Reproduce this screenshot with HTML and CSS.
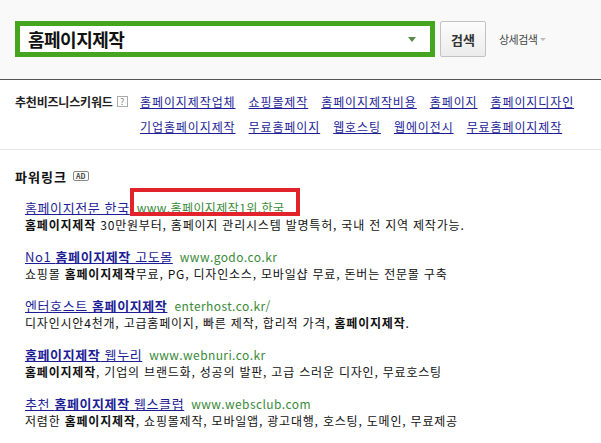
FILE: index.html
```html
<!DOCTYPE html>
<html lang="ko">
<head>
  <meta charset="UTF-8">
  <title>홈페이지제작 : 검색</title>
  <link rel="stylesheet" href="styles.css">
</head>
<body>
  <div class="search-header">
    <div class="search-box">
      <span class="query">홈페이지제작</span>
      <span class="dropdown-arrow"></span>
    </div>
    <button class="search-btn">검색</button>
    <span class="detail-search">상세검색 <span class="small-arrow"></span></span>
  </div>

  <div class="keywords">
    <div class="keywords-label">추천비즈니스키워드 <span class="help-icon">?</span></div>
    <div class="keyword-links">
      <a href="#">홈페이지제작업체</a>
      <a href="#">쇼핑몰제작</a>
      <a href="#">홈페이지제작비용</a>
      <a href="#">홈페이지</a>
      <a href="#">홈페이지디자인</a>
      <a href="#">기업홈페이지제작</a>
      <a href="#">무료홈페이지</a>
      <a href="#">웹호스팅</a>
      <a href="#">웹에이전시</a>
      <a href="#">무료홈페이지제작</a>
    </div>
  </div>

  <div class="powerlink">
    <h3 class="powerlink-title">파워링크 <span class="ad-badge">AD</span></h3>

    <ul class="results">
      <li class="result">
        <div class="result-head"><a href="#">홈페이지전문 한국</a><span class="result-url">www.홈페이지제작1위.한국</span></div>
        <p class="result-desc"><b>홈페이지제작</b> 30만원부터, 홈페이지 관리시스템 발명특허, 국내 전 지역 제작가능.</p>
      </li>
      <li class="result">
        <div class="result-head"><a href="#">No1 <b>홈페이지제작</b> 고도몰</a><span class="result-url">www.godo.co.kr</span></div>
        <p class="result-desc">쇼핑몰 <b>홈페이지제작</b>무료, PG, 디자인소스, 모바일샵 무료, 돈버는 전문몰 구축</p>
      </li>
      <li class="result">
        <div class="result-head"><a href="#">엔터호스트 <b>홈페이지제작</b></a><span class="result-url">enterhost.co.kr/</span></div>
        <p class="result-desc">디자인시안4천개, 고급홈페이지, 빠른 제작, 합리적 가격, <b>홈페이지제작</b>.</p>
      </li>
      <li class="result">
        <div class="result-head"><a href="#"><b>홈페이지제작</b> 웹누리</a><span class="result-url">www.webnuri.co.kr</span></div>
        <p class="result-desc"><b>홈페이지제작</b>, 기업의 브랜드화, 성공의 발판, 고급 스러운 디자인, 무료호스팅</p>
      </li>
      <li class="result">
        <div class="result-head"><a href="#">추천 <b>홈페이지제작</b> 웹스클럽</a><span class="result-url">www.websclub.com</span></div>
        <p class="result-desc">저렴한 <b>홈페이지제작</b>, 쇼핑몰제작, 모바일앱, 광고대행, 호스팅, 도메인, 무료제공</p>
      </li>
    </ul>

    <div class="highlight-box"></div>
  </div>
</body>
</html>
```

FILE: styles.css
```css
/* General Styles */
* {
  margin: 0;
  padding: 0;
  box-sizing: border-box;
}

body {
  font-family: "Noto Sans CJK KR", "Noto Sans", sans-serif;
  font-size: 12px;
  color: #111;
  background: #fff;
}

a {
  color: #1d1d96;
  text-decoration: underline;
}

/* Search Header */
.search-header {
  display: flex;
  align-items: center;
  height: 80px;
  padding: 21px 0 22px 15px;
  background: #f9f9f9;
  border-bottom: 1px solid #555;
}

.search-box {
  display: flex;
  align-items: center;
  justify-content: space-between;
  width: 420px;
  height: 36px;
  padding: 0 14px 0 8px;
  background: #fff;
  border: 5px solid #45a51f;
}

.query {
  font-size: 18px;
  font-weight: bold;
  color: #111;
  letter-spacing: -0.5px;
}

.dropdown-arrow {
  width: 0;
  height: 0;
  border-left: 4px solid transparent;
  border-right: 4px solid transparent;
  border-top: 5px solid #5a8a4a;
}

.search-btn {
  width: 46px;
  height: 36px;
  margin-left: 5px;
  font-family: inherit;
  font-size: 13px;
  font-weight: bold;
  color: #333;
  background: linear-gradient(#fdfdfd, #ececec);
  border: 1px solid #c2c2c2;
  border-radius: 2px;
}

.detail-search {
  display: flex;
  align-items: center;
  gap: 3px;
  margin-left: 13px;
  font-size: 11px;
  color: #444;
  letter-spacing: -0.5px;
}

.small-arrow {
  width: 0;
  height: 0;
  border-left: 3px solid transparent;
  border-right: 3px solid transparent;
  border-top: 3px solid #bbb;
}

/* Business Keywords */
.keywords {
  display: flex;
  align-items: flex-start;
  padding: 9px 0 10px 15px;
  border-bottom: 1px solid #e6e6e6;
  line-height: 25px;
}

.keywords-label {
  display: flex;
  align-items: center;
  width: 125px;
  height: 25px;
  font-weight: bold;
  letter-spacing: -0.2px;
  color: #222;
}

.help-icon {
  display: inline-flex;
  align-items: center;
  justify-content: center;
  width: 11px;
  height: 11px;
  margin-left: 4px;
  font-size: 9px;
  font-weight: normal;
  line-height: 1;
  color: #888;
  border: 1px solid #aaa;
  letter-spacing: 0;
}

.keyword-links {
  display: flex;
  flex-wrap: wrap;
  column-gap: 13px;
  width: 455px;
  letter-spacing: 0.9px;
}

.keyword-links a {
  color: #1d1d96;
}

/* Power Link */
.powerlink {
  position: relative;
  padding: 16px 0 0 15px;
}

.powerlink-title {
  display: flex;
  align-items: center;
  height: 20px;
  font-size: 13px;
  font-weight: bold;
  letter-spacing: 1px;
  color: #111;
}

.ad-badge {
  display: inline-flex;
  align-items: center;
  justify-content: center;
  width: 16px;
  height: 10px;
  margin-left: 6px;
  font-size: 7px;
  font-weight: bold;
  line-height: 1;
  letter-spacing: 0;
  color: #444;
  border: 1px solid #888;
  border-radius: 2px;
}

.results {
  list-style: none;
  margin-top: 13px;
  padding-left: 10px;
}

.result {
  margin-bottom: 15px;
}

.result-head {
  display: flex;
  align-items: baseline;
  gap: 7px;
  height: 17px;
  line-height: 17px;
}

.result-head a {
  font-size: 13px;
  letter-spacing: 0.6px;
}

.result-url {
  font-size: 12px;
  letter-spacing: 0.4px;
  color: #3a8a3a;
}

.result-desc {
  height: 17px;
  line-height: 17px;
  font-size: 12px;
  letter-spacing: 0.8px;
  color: #111;
}

/* Annotation */
.highlight-box {
  position: absolute;
  left: 130px;
  top: 38px;
  width: 170px;
  height: 28px;
  border: 4px solid #e2232b;
}
```
